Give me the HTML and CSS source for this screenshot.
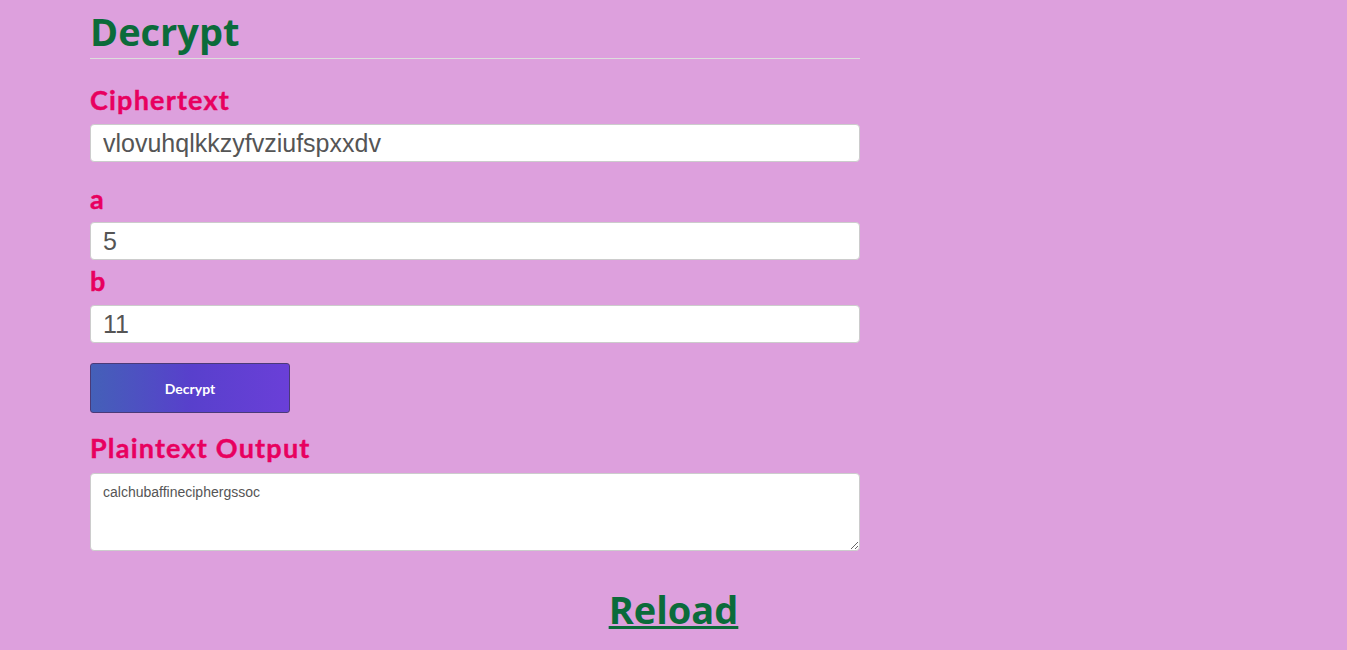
FILE: index.html
```html
<!DOCTYPE html>
<html>
<head>
<meta charset="utf-8">
<link rel="stylesheet" href="styles.css">
</head>
<body>
<div class="page">
  <div class="panel">
    <h1 class="title">Decrypt</h1>
    <label class="label label-first">Ciphertext</label>
    <input class="field" type="text" value="vlovuhqlkkzyfvziufspxxdv">
    <label class="label label-a">a</label>
    <input class="field" type="text" value="5">
    <label class="label label-b">b</label>
    <input class="field" type="text" value="11">
    <button class="btn">Decrypt</button>
    <label class="label label-out">Plaintext Output</label>
    <textarea class="output">calchubaffineciphergssoc</textarea>
  </div>
  <div class="reload-row"><a class="reload" href="#">Reload</a></div>
</div>
</body>
</html>
```
FILE: styles.css
```css
html, body {
  margin: 0;
  padding: 0;
  background: #dda0dd;
}
.page {
  width: 1347px;
  height: 650px;
  overflow: hidden;
}
.panel {
  width: 770px;
  margin-left: 90px;
  display: flex;
  flex-direction: column;
  align-items: flex-start;
}
.title {
  margin: 8px 0 0 0;
  width: 100%;
  font-family: "Comic Sans MS", "Open Sans", sans-serif;
  font-weight: 700;
  font-size: 38px;
  line-height: 46px;
  color: #0b6b3a;
  padding-bottom: 4px;
  border-bottom: 1px solid #dddddd;
}
.label {
  font-family: "Lato", sans-serif;
  font-weight: 700;
  font-size: 27px;
  line-height: 30px;
  letter-spacing: 1.2px;
  color: #e8005f;
  -webkit-text-stroke: 0.4px #e8005f;
}
.label-first { margin-top: 26px; margin-bottom: 9px; }
.label-a { margin-top: 22px; margin-bottom: 8px; }
.label-b { margin-top: 6px; margin-bottom: 9px; }
.label-out { margin-top: 20px; margin-bottom: 10px; }
.field {
  box-sizing: border-box;
  width: 770px;
  height: 38px;
  margin: 0;
  padding: 0 12px;
  border: 1px solid #cccccc;
  border-radius: 4px;
  background: #ffffff;
  font-family: "Liberation Sans", Arial, sans-serif;
  font-size: 25px;
  color: #555555;
}
.btn {
  margin-top: 20px;
  width: 200px;
  height: 50px;
  border: 1px solid #4a3a78;
  border-radius: 3px;
  background: linear-gradient(90deg, #4460b8 0%, #5840cc 50%, #6a3fd8 100%);
  color: #ffffff;
  font-family: "Lato", sans-serif;
  font-weight: 700;
  font-size: 14px;
  cursor: pointer;
}
.output {
  box-sizing: border-box;
  width: 770px;
  height: 78px;
  margin: 0;
  padding: 10px 12px;
  border: 1px solid #cccccc;
  border-radius: 4px;
  background: #ffffff;
  font-family: "Liberation Sans", Arial, sans-serif;
  font-size: 14px;
  color: #555555;
  resize: vertical;
}
.reload-row {
  display: flex;
  justify-content: center;
  margin-top: 35px;
}
.reload {
  font-family: "Comic Sans MS", "Open Sans", sans-serif;
  font-weight: 700;
  font-size: 38px;
  line-height: 46px;
  color: #0b6b3a;
  text-decoration: underline;
}
```
